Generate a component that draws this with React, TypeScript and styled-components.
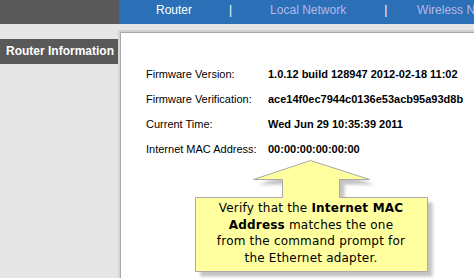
import styled, { createGlobalStyle } from "styled-components"

const GlobalStyle = createGlobalStyle`
  html, body {
    margin: 0;
    padding: 0;
    background: #e6e6e6;
    overflow: hidden;
  }
  body {
    font-family: "Liberation Sans", Arial, sans-serif;
  }
`

const Page = styled.div`
  position: relative;
  width: 474px;
  height: 278px;
  overflow: hidden;
  background: #e6e6e6;
`

// top navigation
const TopBar = styled.div`
  display: flex;
  height: 24px;
`

const TopLeft = styled.div`
  flex: 0 0 119px;
  background: #595959;
`

const Nav = styled.div`
  flex: 1;
  min-width: 0;
  overflow: hidden;
  display: flex;
  align-items: center;
  background: #2b6fb6;
  padding-bottom: 5px;
  box-sizing: border-box;
  white-space: nowrap;
`

const NavItem = styled.div<{ $w: number; $active?: boolean }>`
  flex: 0 0 ${(p) => p.$w}px;
  text-align: center;
  font-size: 12px;
  color: ${(p) => (p.$active ? "#ffffff" : "#b4b8ec")};
`

const NavSep = styled.div`
  flex: 0 0 2px;
  text-align: center;
  font-size: 12px;
  color: #ffffff;
`

// body
const Body = styled.div`
  display: flex;
  height: 254px;
`

const Sidebar = styled.div`
  flex: 0 0 118px;
  padding-top: 15px;
`

const SectionTitle = styled.div`
  height: 25px;
  line-height: 24px;
  background: #595959;
  color: #ffffff;
  font-weight: bold;
  font-size: 12px;
  padding-left: 6px;
  white-space: nowrap;
`

const Main = styled.div`
  flex: 1;
  min-width: 0;
  padding-top: 6px;
  display: flex;
`

const Panel = styled.div`
  flex: 1;
  background: #ffffff;
  border-top: 2px solid #cfcfcf;
  border-left: 2px solid #d6d6d6;
  box-shadow: inset 1px 1px 0 #a9a9a9;
  padding: 29px 0 0 26px;
  overflow: hidden;
`

const InfoGrid = styled.div`
  display: grid;
  grid-template-columns: 122px auto;
  grid-auto-rows: 25px;
  align-items: center;
  font-size: 11px;
  color: #000000;
  white-space: nowrap;
`

const Label = styled.div``

const Value = styled.div`
  font-weight: bold;
`

// callout overlay
const Callout = styled.div`
  position: absolute;
  left: 190px;
  top: 155px;
  width: 250px;
  height: 125px;
`

const CalloutShape = styled.svg`
  position: absolute;
  left: 0;
  top: 0;
`

const CalloutText = styled.div`
  position: absolute;
  left: 5px;
  top: 45px;
  width: 232px;
  text-align: center;
  font-family: "DejaVu Sans", Verdana, sans-serif;
  font-size: 12px;
  letter-spacing: 0.2px;
  line-height: 16.5px;
  color: #000000;
  b {
    font-weight: bold;
  }
`

const rows = [
  ["Firmware Version:", "1.0.12 build 128947 2012-02-18 11:02"],
  ["Firmware Verification:", "ace14f0ec7944c0136e53acb95a93d8b"],
  ["Current Time:", "Wed Jun 29 10:35:39 2011"],
  ["Internet MAC Address:", "00:00:00:00:00:00"],
]

const shapePath =
  "M5.5 42.5 H92.5 V24.5 H63.5 L120.5 5.5 L179.5 24.5 H149.5 V42.5 H237.5 V116.5 H5.5 Z"

const App = () => {
  return (
    <Page>
      <GlobalStyle />
      <TopBar>
        <TopLeft />
        <Nav>
          <NavItem $w={110} $active>Router</NavItem>
          <NavSep>|</NavSep>
          <NavItem $w={152}>Local Network</NavItem>
          <NavSep>|</NavSep>
          <NavItem $w={153}>Wireless Network</NavItem>
        </Nav>
      </TopBar>
      <Body>
        <Sidebar>
          <SectionTitle>Router Information</SectionTitle>
        </Sidebar>
        <Main>
          <Panel>
            <InfoGrid>
              {rows.map(([l, v]) => (
                <>
                  <Label key={l}>{l}</Label>
                  <Value key={v}>{v}</Value>
                </>
              ))}
            </InfoGrid>
          </Panel>
        </Main>
      </Body>

      <Callout>
        <CalloutShape width="250" height="125" viewBox="0 0 250 125">
          <defs>
            <filter id="soft" x="-10%" y="-10%" width="130%" height="130%">
              <feGaussianBlur stdDeviation="1.4" />
            </filter>
          </defs>
          <path d={shapePath} transform="translate(5 5)" fill="#c4c4c4" filter="url(#soft)" />
          <path d={shapePath} fill="#ffffa0" stroke="#a9a9a9" strokeWidth="1" />
        </CalloutShape>
        <CalloutText>
          Verify that the <b>Internet MAC</b>
          <br />
          <b>Address</b> matches the one
          <br />
          from the command prompt for
          <br />
          the Ethernet adapter.
        </CalloutText>
      </Callout>
    </Page>
  )
}

export default App
